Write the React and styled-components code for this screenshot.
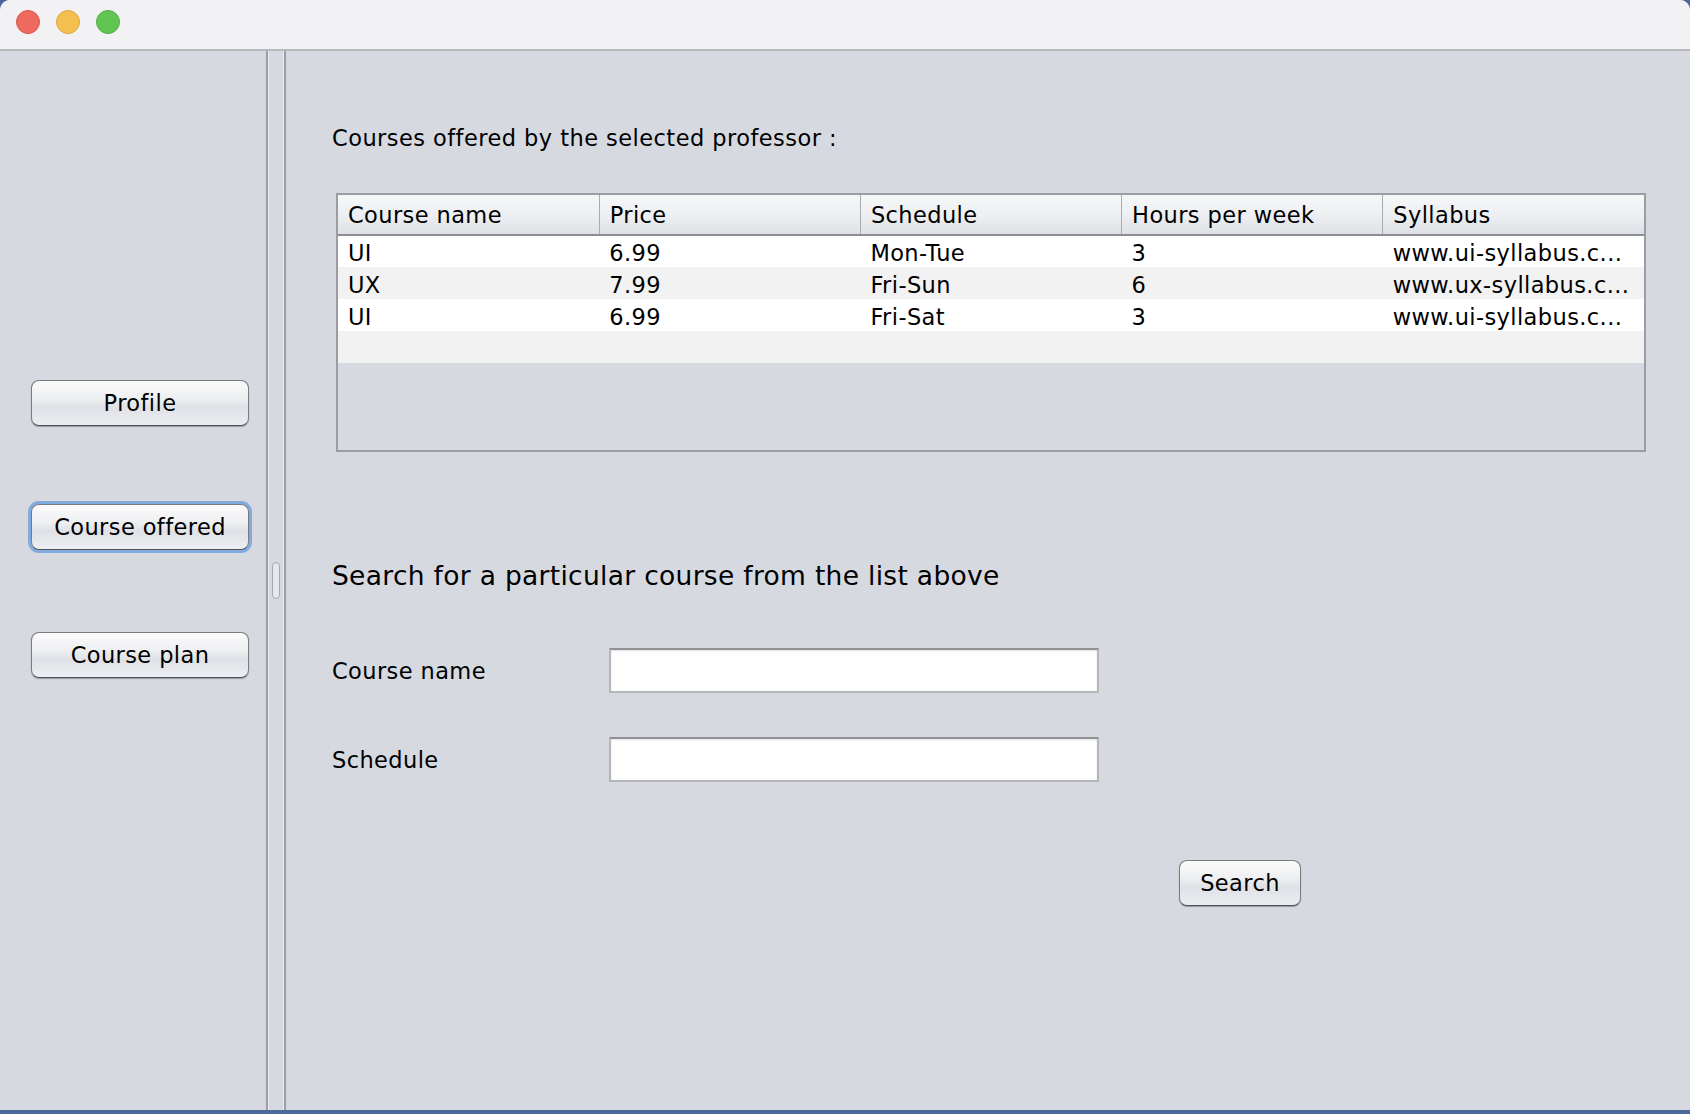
import React from "react";
import styled, { createGlobalStyle } from "styled-components";

const GlobalStyle = createGlobalStyle`
  html, body {
    margin: 0;
    padding: 0;
    background: #4b6a99;
  }
  body {
    font-family: "DejaVu Sans", "Liberation Sans", sans-serif;
    color: #000;
  }
  * { box-sizing: border-box; }
`;

const Window = styled.div`
  width: 1690px;
  height: 1110px;
  background: #d6d9e0;
  border-radius: 10px 10px 0 0;
  overflow: hidden;
  display: flex;
  flex-direction: column;
`;

const TitleBar = styled.div`
  height: 51px;
  background: #f2f2f4;
  border-bottom: 2px solid #b9b9bd;
  display: flex;
  align-items: flex-start;
  padding: 10px 0 0 16px;
  gap: 16px;
`;

const Light = styled.span`
  width: 24px;
  height: 24px;
  border-radius: 50%;
  background: ${(p) => p.color};
  border: 1px solid ${(p) => p.edge};
`;

const Main = styled.div`
  flex: 1;
  display: flex;
`;

const Sidebar = styled.div`
  width: 266px;
  display: flex;
  flex-direction: column;
  align-items: flex-start;
  padding: 329px 0 0 31px;
`;

const AquaButton = styled.button`
  width: ${(p) => p.w || 218}px;
  height: 46px;
  margin-top: ${(p) => p.top || 0}px;
  border-radius: 8px;
  border: 1px solid #7a7b80;
  border-bottom-color: #505156;
  background: linear-gradient(
    to bottom,
    #fbfbfc 0%,
    #eeeff1 40%,
    #e0e1e6 60%,
    #eceef2 100%
  );
  box-shadow: ${(p) =>
    p.focused
      ? "0 0 0 3px #80abdc, 0 1px 1px rgba(0,0,0,0.3)"
      : "0 1px 1px rgba(0,0,0,0.3)"};
  font-family: "DejaVu Sans", "Liberation Sans", sans-serif;
  font-size: 22.5px;
  letter-spacing: 0.4px;
  color: #000;
  padding: 0;
  cursor: pointer;
`;

const Divider = styled.div`
  width: 20px;
  border-left: 2px solid #9c9da2;
  border-right: 2px solid #9c9da2;
  box-shadow: inset 1px 0 #eceef1, inset -1px 0 #eceef1;
  display: flex;
  align-items: center;
  justify-content: center;
`;

const Grip = styled.div`
  width: 8px;
  height: 37px;
  border: 1px solid #a6a8ae;
  border-radius: 4px;
  background: #e6e7eb;
`;

const Content = styled.div`
  flex: 1;
  display: flex;
  flex-direction: column;
  padding: 74px 44px 0 46px;
`;

const Title = styled.div`
  font-size: 22.5px;
  line-height: 26px;
  letter-spacing: 0.45px;
`;

const TableBox = styled.div`
  margin: 42px 0 0 4px;
  height: 259px;
  border: 2px solid #9b9da4;
  background: #d6d9e0;
`;

const Table = styled.table`
  width: 100%;
  table-layout: fixed;
  border-collapse: collapse;
  font-size: 22.5px;
  letter-spacing: 0.4px;
`;

const HeadCell = styled.th`
  height: 40px;
  padding: 0 0 0 10px;
  text-align: left;
  font-weight: normal;
  background: linear-gradient(to bottom, #f7f7f9 0%, #eceef1 55%, #dfe0e5 100%);
  border-bottom: 2px solid #8c8e94;
  border-right: 1px solid #a9abb1;
  &:last-child {
    border-right: none;
  }
`;

const Row = styled.tr`
  height: 32px;
  background: ${(p) => (p.alt ? "#f2f2f2" : "#ffffff")};
`;

const Cell = styled.td`
  padding: 3px 0 0 10px;
  white-space: nowrap;
  overflow: hidden;
`;

const Heading = styled.div`
  margin-top: 108px;
  font-size: 26.5px;
  line-height: 32px;
  letter-spacing: 0.3px;
`;

const FormRow = styled.div`
  display: flex;
  align-items: center;
  margin-top: ${(p) => p.top}px;
`;

const Label = styled.label`
  width: 277px;
  font-size: 22.5px;
  letter-spacing: 0.4px;
`;

const Field = styled.input`
  width: 490px;
  height: 45px;
  background: #fff;
  border: 2px solid #b5b6ba;
  border-top-color: #8f9094;
  box-shadow: inset 0 1px 2px rgba(0, 0, 0, 0.12);
  outline: none;
  font-family: "DejaVu Sans", sans-serif;
  font-size: 20px;
  padding: 0 8px;
`;

const ButtonRow = styled.div`
  margin-top: 78px;
  padding-left: 847px;
`;

const courses = [
  ["UI", "6.99", "Mon-Tue", "3", "www.ui-syllabus.c..."],
  ["UX", "7.99", "Fri-Sun", "6", "www.ux-syllabus.c..."],
  ["UI", "6.99", "Fri-Sat", "3", "www.ui-syllabus.c..."],
];

const columns = ["Course name", "Price", "Schedule", "Hours per week", "Syllabus"];

export default function App() {
  return (
    <>
      <GlobalStyle />
      <Window>
        <TitleBar>
          <Light color="#ee6a5f" edge="#d9574c" />
          <Light color="#f5bf4f" edge="#dea63a" />
          <Light color="#61c554" edge="#4fae43" />
        </TitleBar>
        <Main>
          <Sidebar>
            <AquaButton>Profile</AquaButton>
            <AquaButton focused top={78}>Course offered</AquaButton>
            <AquaButton top={82}>Course plan</AquaButton>
          </Sidebar>
          <Divider>
            <Grip />
          </Divider>
          <Content>
            <Title>Courses offered by the selected professor :</Title>
            <TableBox>
              <Table>
                <thead>
                  <tr>
                    {columns.map((c) => (
                      <HeadCell key={c}>{c}</HeadCell>
                    ))}
                  </tr>
                </thead>
                <tbody>
                  {courses.map((r, i) => (
                    <Row key={i} alt={i % 2 === 1}>
                      {r.map((v, j) => (
                        <Cell key={j}>{v}</Cell>
                      ))}
                    </Row>
                  ))}
                  <Row alt>
                    {columns.map((c) => (
                      <Cell key={c} />
                    ))}
                  </Row>
                </tbody>
              </Table>
            </TableBox>
            <Heading>Search for a particular course from the list above</Heading>
            <FormRow top={56}>
              <Label>Course name</Label>
              <Field />
            </FormRow>
            <FormRow top={44}>
              <Label>Schedule</Label>
              <Field />
            </FormRow>
            <ButtonRow>
              <AquaButton w={122}>Search</AquaButton>
            </ButtonRow>
          </Content>
        </Main>
      </Window>
    </>
  );
}
